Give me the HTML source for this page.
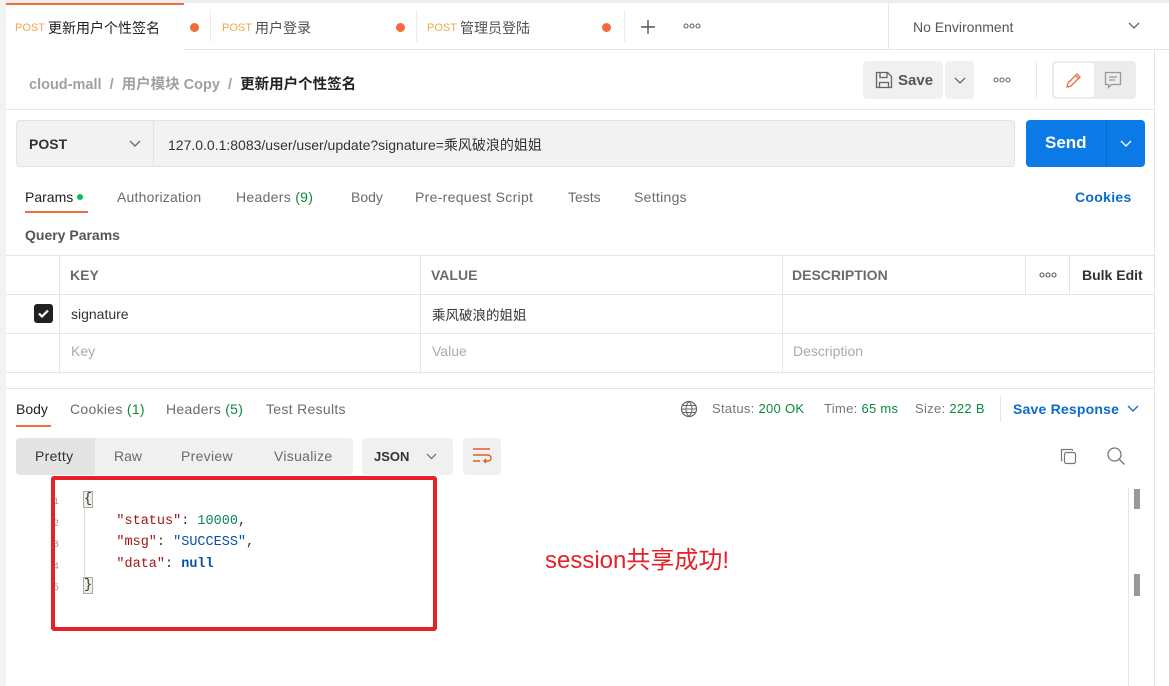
<!DOCTYPE html>
<html><head><meta charset="utf-8"><style>
*{box-sizing:border-box;margin:0;padding:0}
body{width:1169px;height:686px;overflow:hidden;background:#fff;font-family:"Liberation Sans","Noto Sans CJK SC",sans-serif;color:#212121;position:relative;font-size:14px}
.a{position:absolute;white-space:nowrap}
.g{color:#6b6b6b}
.mono{font-family:"Liberation Mono","Noto Sans CJK SC",monospace;font-size:13.5px}
</style></head><body>
<div class="a" style="left:0;top:0;width:6px;height:686px;background:#f2f2f2"></div>
<div class="a" style="left:6px;top:0;width:1163px;height:50px;background:#fff;border-bottom:1px solid #e6e6e6;border-top:3px solid #ededed"></div>
<div class="a" style="left:6px;top:3px;width:178px;height:48px;background:#fff;border-top:2px solid #f26b3a"></div>
<div class="a" style="left:15px;top:22px;font-size:11px;color:#f0a84a">POST</div>
<div class="a" style="left:48px;top:18px;font-size:14px">更新用户个性签名</div>
<div class="a" style="left:190px;top:23px;width:9px;height:9px;border-radius:50%;background:#f26b3a"></div>
<div class="a" style="left:210px;top:10px;width:1px;height:32px;background:#ececec"></div>
<div class="a" style="left:222px;top:22px;font-size:11px;color:#f0a84a">POST</div>
<div class="a" style="left:255px;top:18px;font-size:14px;color:#505050">用户登录</div>
<div class="a" style="left:396px;top:23px;width:9px;height:9px;border-radius:50%;background:#f26b3a"></div>
<div class="a" style="left:416px;top:10px;width:1px;height:32px;background:#ececec"></div>
<div class="a" style="left:427px;top:22px;font-size:11px;color:#f0a84a">POST</div>
<div class="a" style="left:460px;top:18px;font-size:14px;color:#505050">管理员登陆</div>
<div class="a" style="left:602px;top:23px;width:9px;height:9px;border-radius:50%;background:#f26b3a"></div>
<div class="a" style="left:624px;top:10px;width:1px;height:32px;background:#ececec"></div>
<svg class="a" style="left:640px;top:19px" width="16" height="16"><path d="M8 1v14 M1 8h14" stroke="#555" stroke-width="1.4"/></svg>
<svg class="a" style="left:683px;top:23px" width="18" height="6"><circle cx="3" cy="3" r="2" fill="none" stroke="#666" stroke-width="1.1"/><circle cx="9" cy="3" r="2" fill="none" stroke="#666" stroke-width="1.1"/><circle cx="15" cy="3" r="2" fill="none" stroke="#666" stroke-width="1.1"/></svg>
<div class="a" style="left:888px;top:3px;width:1px;height:47px;background:#e6e6e6"></div>
<div class="a" style="left:913px;top:19px;font-size:14px;color:#555">No Environment</div>
<svg class="a" style="left:1128px;top:22px" width="12" height="8"><path d="M1 1l5 5 5-5" stroke="#666" fill="none" stroke-width="1.3"/></svg>
<div class="a" style="left:29px;top:73px;font-size:14.5px;color:#a0a0a0;font-weight:bold">cloud-mall &nbsp;/&nbsp; 用户模块 Copy &nbsp;/&nbsp; <span style="color:#212121">更新用户个性签名</span></div>
<div class="a" style="left:863px;top:61px;width:80px;height:38px;background:#f0f0f0;border-radius:4px"></div>
<svg class="a" style="left:875px;top:71px" width="18" height="18"><path d="M1.5 1.5h11l4 4v11h-15z M5 1.5v5h7v-5 M4.5 16.5v-5h9v5" stroke="#666" fill="none" stroke-width="1.3"/></svg>
<div class="a" style="left:898px;top:72px;font-size:15px;color:#555;font-weight:bold">Save</div>
<div class="a" style="left:945px;top:61px;width:29px;height:38px;background:#f0f0f0;border-radius:4px"></div>
<svg class="a" style="left:954px;top:77px" width="12" height="8"><path d="M1 1l5 5 5-5" stroke="#666" fill="none" stroke-width="1.3"/></svg>
<svg class="a" style="left:993px;top:77px" width="18" height="6"><circle cx="3" cy="3" r="2" fill="none" stroke="#666" stroke-width="1.1"/><circle cx="9" cy="3" r="2" fill="none" stroke="#666" stroke-width="1.1"/><circle cx="15" cy="3" r="2" fill="none" stroke="#666" stroke-width="1.1"/></svg>
<div class="a" style="left:1036px;top:61px;width:1px;height:38px;background:#e6e6e6"></div>
<div class="a" style="left:1052px;top:61px;width:84px;height:38px;background:#ececec;border-radius:4px"></div>
<div class="a" style="left:1054px;top:63px;width:40px;height:34px;background:#fff;border-radius:3px"></div>
<svg class="a" style="left:1064px;top:70px" width="20" height="20"><path d="M3 17l1-4 9-9 3 3-9 9z M11.5 5.5l3 3" stroke="#f26b3a" fill="none" stroke-width="1.3"/></svg>
<svg class="a" style="left:1104px;top:71px" width="18" height="18"><path d="M1.5 1.5h15v12h-9l-3 3v-3h-3z M5 6h8 M5 9h6" stroke="#999" fill="none" stroke-width="1.3"/></svg>
<div class="a" style="left:6px;top:109px;width:1148px;height:1px;background:#e6e6e6"></div>
<div class="a" style="left:1154px;top:50px;width:1px;height:636px;background:#e6e6e6"></div>
<div class="a" style="left:16px;top:120px;width:999px;height:47px;background:#f2f2f2;border:1px solid #e3e3e3;border-radius:4px"></div>
<div class="a" style="left:153px;top:121px;width:1px;height:45px;background:#e3e3e3"></div>
<div class="a" style="left:29px;top:136px;font-size:14px;font-weight:bold;color:#333">POST</div>
<svg class="a" style="left:129px;top:140px" width="12" height="8"><path d="M1 1l5 5 5-5" stroke="#666" fill="none" stroke-width="1.3"/></svg>
<div class="a" style="left:168px;top:135px;font-size:14px;color:#333">127.0.0.1:8083/user/user/update?signature=乘风破浪的姐姐</div>
<div class="a" style="left:1026px;top:120px;width:119px;height:47px;background:#0b7ae6;border-radius:4px"></div>
<div class="a" style="left:1106px;top:120px;width:1px;height:47px;background:#0968c5"></div>
<div class="a" style="left:1045px;top:133px;font-size:17px;font-weight:bold;color:#fff">Send</div>
<svg class="a" style="left:1120px;top:140px" width="12" height="8"><path d="M1 1l5 5 5-5" stroke="#fff" fill="none" stroke-width="1.4"/></svg>
<div class="a" style="left:25px;top:189px;font-size:14px;color:#212121">Params<span style="display:inline-block;width:6px;height:6px;border-radius:50%;background:#0cbb52;margin-left:4px;vertical-align:2px"></span></div>
<div class="a" style="left:25px;top:211px;width:63px;height:2px;background:#f26b3a"></div>
<div class="a g" style="left:117px;top:189px;letter-spacing:0.2px">Authorization</div>
<div class="a g" style="left:236px;top:189px;letter-spacing:0.3px">Headers <span style="color:#0a8a3c">(9)</span></div>
<div class="a g" style="left:351px;top:189px">Body</div>
<div class="a g" style="left:415px;top:189px;letter-spacing:0.3px">Pre-request Script</div>
<div class="a g" style="left:568px;top:189px">Tests</div>
<div class="a g" style="left:634px;top:189px;letter-spacing:0.3px">Settings</div>
<div class="a" style="left:1075px;top:189px;color:#0b6bcb;font-weight:bold;letter-spacing:0.3px">Cookies</div>
<div class="a" style="left:25px;top:227px;font-weight:bold;color:#555">Query Params</div>
<div class="a" style="left:6px;top:255px;width:1148px;height:1px;background:#e6e6e6"></div>
<div class="a" style="left:6px;top:294px;width:1148px;height:1px;background:#e6e6e6"></div>
<div class="a" style="left:6px;top:333px;width:1148px;height:1px;background:#e6e6e6"></div>
<div class="a" style="left:6px;top:372px;width:1148px;height:1px;background:#e6e6e6"></div>
<div class="a" style="left:59px;top:255px;width:1px;height:117px;background:#e6e6e6"></div>
<div class="a" style="left:420px;top:255px;width:1px;height:117px;background:#e6e6e6"></div>
<div class="a" style="left:782px;top:255px;width:1px;height:117px;background:#e6e6e6"></div>
<div class="a" style="left:1025px;top:255px;width:1px;height:39px;background:#e6e6e6"></div>
<div class="a" style="left:1069px;top:255px;width:1px;height:39px;background:#e6e6e6"></div>
<div class="a" style="left:70px;top:267px;font-weight:bold;color:#6b6b6b">KEY</div>
<div class="a" style="left:431px;top:267px;font-weight:bold;color:#6b6b6b">VALUE</div>
<div class="a" style="left:792px;top:267px;font-weight:bold;color:#6b6b6b">DESCRIPTION</div>
<svg class="a" style="left:1039px;top:272px" width="18" height="6"><circle cx="3" cy="3" r="2" fill="none" stroke="#555" stroke-width="1.1"/><circle cx="9" cy="3" r="2" fill="none" stroke="#555" stroke-width="1.1"/><circle cx="15" cy="3" r="2" fill="none" stroke="#555" stroke-width="1.1"/></svg>
<div class="a" style="left:1082px;top:267px;font-weight:bold;color:#333">Bulk Edit</div>
<div class="a" style="left:34px;top:304px;width:19px;height:19px;background:#212121;border-radius:3px"></div>
<svg class="a" style="left:36px;top:306px" width="15" height="15"><path d="M3 7.5l3 3 6-6" stroke="#fff" fill="none" stroke-width="2.2"/></svg>
<div class="a" style="left:71px;top:306px;color:#333">signature</div>
<div class="a" style="left:432px;top:304px;font-size:13.5px;color:#333">乘风破浪的姐姐</div>
<div class="a" style="left:71px;top:343px;color:#aaa">Key</div>
<div class="a" style="left:432px;top:343px;color:#aaa">Value</div>
<div class="a" style="left:793px;top:343px;color:#aaa">Description</div>
<div class="a" style="left:6px;top:388px;width:1148px;height:1px;background:#e6e6e6"></div>
<div class="a" style="left:16px;top:401px;color:#212121">Body</div>
<div class="a" style="left:16px;top:425px;width:35px;height:2px;background:#f26b3a"></div>
<div class="a g" style="left:70px;top:401px;letter-spacing:0.3px">Cookies <span style="color:#0a8a3c">(1)</span></div>
<div class="a g" style="left:166px;top:401px;letter-spacing:0.3px">Headers <span style="color:#0a8a3c">(5)</span></div>
<div class="a g" style="left:266px;top:401px;letter-spacing:0.3px">Test Results</div>
<svg class="a" style="left:680px;top:400px" width="18" height="18"><circle cx="9" cy="9" r="7.5" stroke="#666" fill="none" stroke-width="1.2"/><path d="M1.5 9h15 M9 1.5c-4 4-4 11 0 15 M9 1.5c4 4 4 11 0 15 M2.5 5.5h13 M2.5 12.5h13" stroke="#666" fill="none" stroke-width="1"/></svg>
<div class="a" style="left:712px;top:401px;font-size:13px;color:#777;letter-spacing:0.3px">Status: <span style="color:#0a8a3c">200 OK</span></div>
<div class="a" style="left:824px;top:401px;font-size:13px;color:#777;letter-spacing:0.3px">Time: <span style="color:#0a8a3c">65 ms</span></div>
<div class="a" style="left:915px;top:401px;font-size:13px;color:#777;letter-spacing:0.3px">Size: <span style="color:#0a8a3c">222 B</span></div>
<div class="a" style="left:1000px;top:396px;width:1px;height:26px;background:#e6e6e6"></div>
<div class="a" style="left:1013px;top:401px;color:#0b6bcb;font-weight:bold;letter-spacing:0.2px">Save Response</div>
<svg class="a" style="left:1127px;top:405px" width="12" height="8"><path d="M1 1l5 5 5-5" stroke="#0b6bcb" fill="none" stroke-width="1.3"/></svg>
<div class="a" style="left:16px;top:438px;width:337px;height:37px;background:#f0f0f0;border-radius:4px"></div>
<div class="a" style="left:16px;top:438px;width:79px;height:37px;background:#e4e4e4;border-radius:4px 0 0 4px"></div>
<div class="a" style="left:35px;top:448px;color:#333;letter-spacing:0.3px">Pretty</div>
<div class="a g" style="left:114px;top:448px">Raw</div>
<div class="a g" style="left:181px;top:448px;letter-spacing:0.3px">Preview</div>
<div class="a g" style="left:274px;top:448px;letter-spacing:0.3px">Visualize</div>
<div class="a" style="left:362px;top:438px;width:91px;height:37px;background:#f0f0f0;border-radius:4px"></div>
<div class="a" style="left:374px;top:449px;font-size:13px;font-weight:bold;color:#333">JSON</div>
<svg class="a" style="left:426px;top:453px" width="11" height="7"><path d="M1 1l4.5 4.5 4.5-4.5" stroke="#666" fill="none" stroke-width="1.2"/></svg>
<div class="a" style="left:463px;top:438px;width:38px;height:37px;background:#f0f0f0;border-radius:4px"></div>
<svg class="a" style="left:472px;top:447px" width="20" height="18"><path d="M1 2h17 M1 8h15a3 3 0 0 1 0 6h-4 M14 12l-2 2 2 2 M1 14h7" stroke="#e05a2b" fill="none" stroke-width="1.4"/></svg>
<svg class="a" style="left:1059px;top:447px" width="19" height="19"><rect x="5.5" y="5.5" width="11" height="11" rx="2" stroke="#777" fill="none" stroke-width="1.2"/><path d="M3.5 13.5h-1v-11h11v1" stroke="#777" fill="none" stroke-width="1.2"/></svg>
<svg class="a" style="left:1106px;top:446px" width="20" height="20"><circle cx="8.5" cy="8.5" r="6.5" stroke="#777" fill="none" stroke-width="1.3"/><path d="M13.5 13.5l5 5" stroke="#777" stroke-width="1.3"/></svg>
<div class="a" style="left:1134px;top:489px;width:6px;height:20px;background:#999"></div>
<div class="a" style="left:1134px;top:574px;width:6px;height:22px;background:#999"></div>
<div class="a" style="left:1128px;top:488px;width:1px;height:198px;background:#e6e6e6"></div>
<div class="a mono" style="left:53px;top:492px;font-size:10px;color:#999;line-height:21.5px">1<br>2<br>3<br>4<br>5</div>
<div class="a" style="left:84px;top:492px;width:1px;height:100px;background:#ddd"></div>
<div class="a mono" style="left:84px;top:489px;line-height:21.5px;color:#333"><span style="background:#eef0e6;outline:1px solid #aaa">{</span><br>&nbsp;&nbsp;&nbsp;&nbsp;<span style="color:#a31515">"status"</span>: <span style="color:#098658">10000</span>,<br>&nbsp;&nbsp;&nbsp;&nbsp;<span style="color:#a31515">"msg"</span>: <span style="color:#0451a5">"SUCCESS"</span>,<br>&nbsp;&nbsp;&nbsp;&nbsp;<span style="color:#a31515">"data"</span>: <span style="color:#0451a5;font-weight:bold">null</span><br><span style="background:#eef0e6;outline:1px solid #aaa">}</span></div>
<div class="a" style="left:51px;top:476px;width:386px;height:155px;border:4px solid #e8202a;border-radius:3px"></div>
<div class="a" style="left:545px;top:540px;font-size:24px;color:#e8202a">session共享成功!</div>
</body></html>
